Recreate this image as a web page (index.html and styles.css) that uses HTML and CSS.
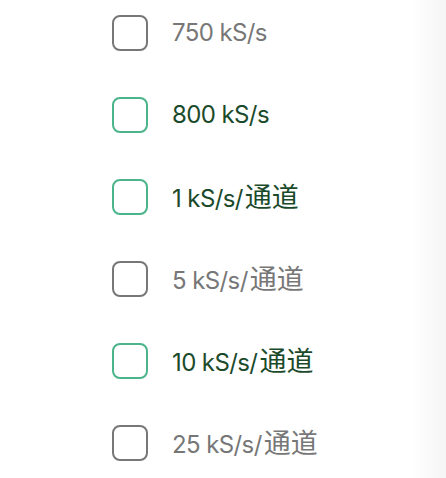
FILE: index.html
```html
<!DOCTYPE html>
<html lang="zh">
<head>
<meta charset="utf-8">
<link rel="stylesheet" href="styles.css">
</head>
<body>
<div class="page">
  <ul class="options">
    <li class="option"><span class="box"></span><span class="label">750 kS/s</span></li>
    <li class="option active"><span class="box"></span><span class="label">800 kS/s</span></li>
    <li class="option active"><span class="box"></span><span class="label">1 kS/s/<span class="cjk">通道</span></span></li>
    <li class="option"><span class="box"></span><span class="label">5 kS/s/<span class="cjk">通道</span></span></li>
    <li class="option active"><span class="box"></span><span class="label">10 kS/s/<span class="cjk">通道</span></span></li>
    <li class="option"><span class="box"></span><span class="label">25 kS/s/<span class="cjk">通道</span></span></li>
  </ul>
  <div class="edge"></div>
</div>
</body>
</html>
```
FILE: styles.css
```css
html, body {
  margin: 0;
  padding: 0;
  background: #ffffff;
}
.page {
  width: 446px;
  height: 478px;
  display: flex;
  overflow: hidden;
}
.options {
  list-style: none;
  margin: 0;
  padding: 15px 0 0 112px;
  flex: 1;
  display: flex;
  flex-direction: column;
  gap: 46px;
}
.option {
  display: flex;
  align-items: center;
  gap: 24px;
  height: 36px;
  font-family: Inter, "Noto Sans CJK SC", sans-serif;
  font-size: 24px;
  letter-spacing: -0.6px;
  color: #777777;
}
.box {
  box-sizing: border-box;
  width: 36px;
  height: 36px;
  flex: none;
  border: 2px solid #777777;
  border-radius: 8px;
}
.option.active {
  color: #1b4a2b;
}
.option.active .box {
  border-color: #4cb48a;
}
.label {
  white-space: nowrap;
  line-height: 36px;
}
.cjk {
  font-family: "Noto Sans CJK SC", sans-serif;
  font-size: 27px;
  letter-spacing: 0;
  margin-left: 2px;
}
.edge {
  width: 34px;
  flex: none;
  background: linear-gradient(to right, #ffffff, #f5f5f5);
}
```
